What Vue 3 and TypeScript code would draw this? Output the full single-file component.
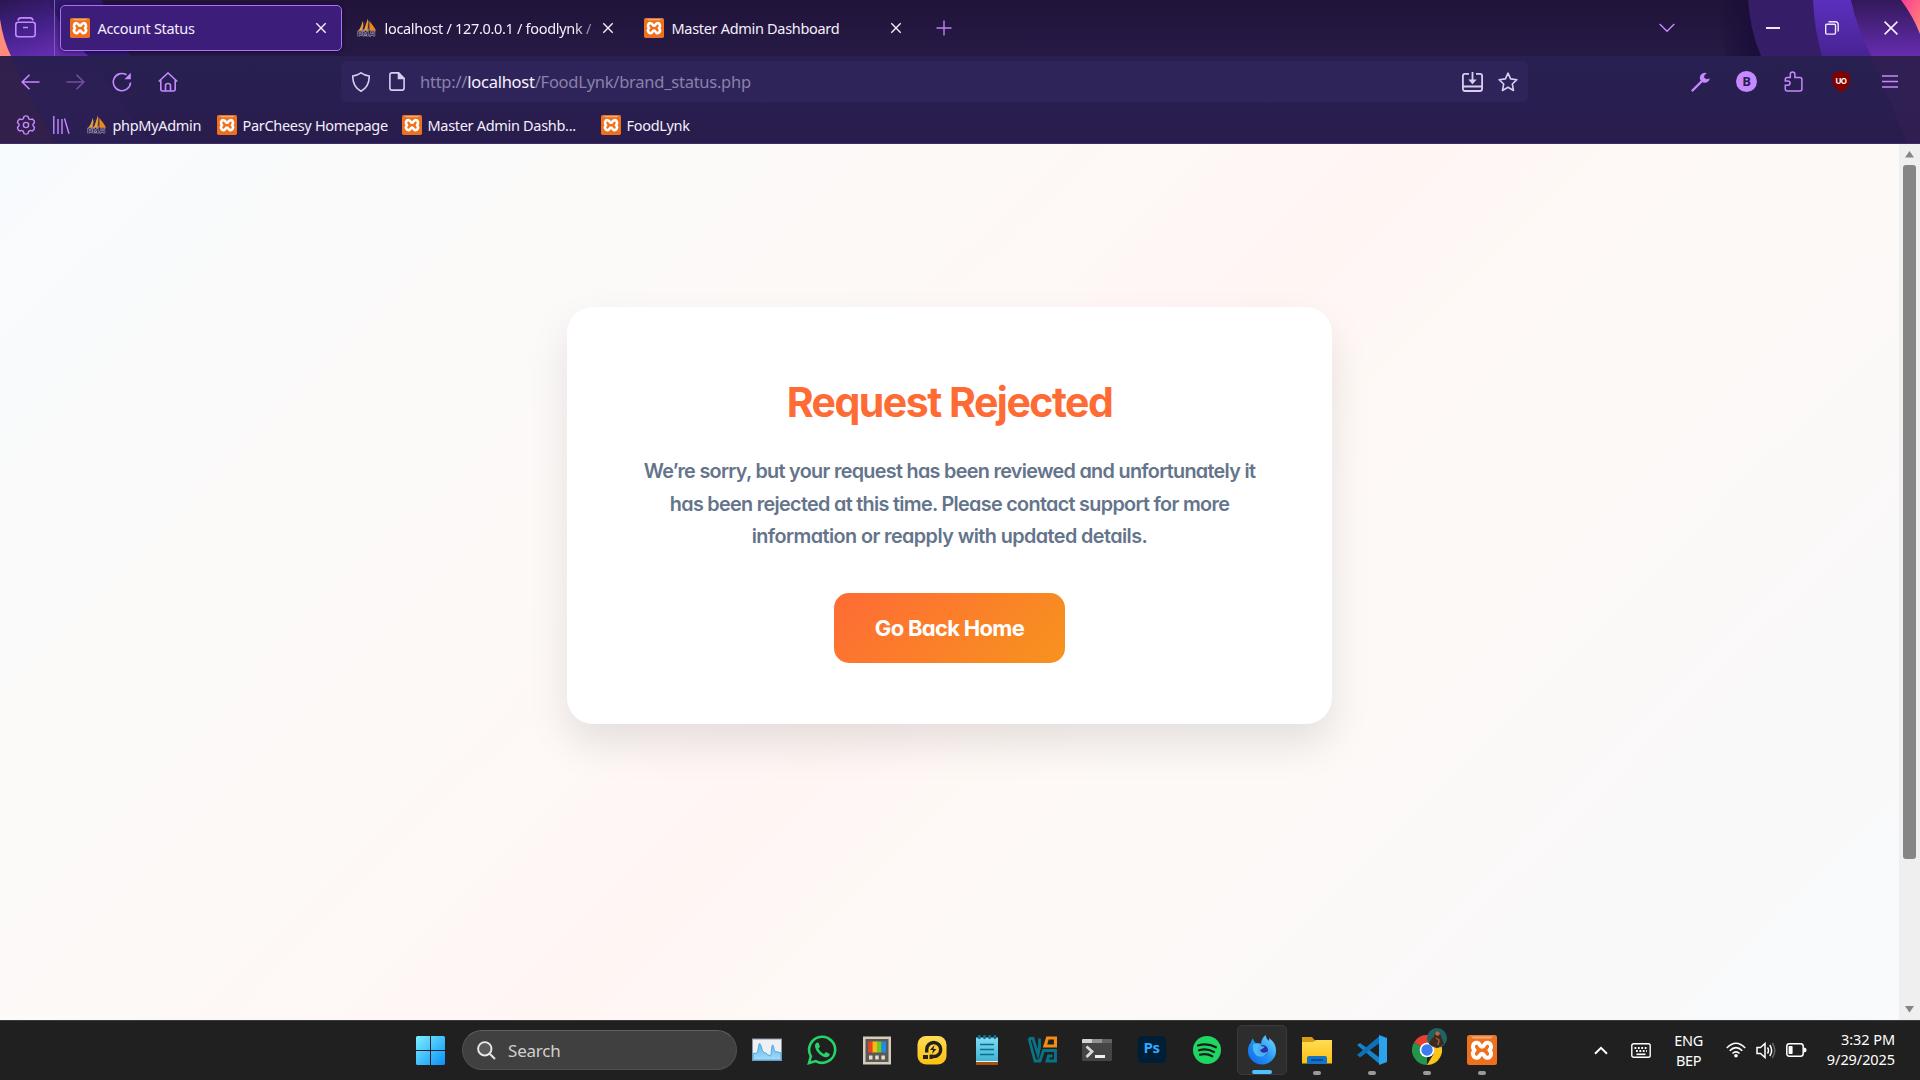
<script setup lang="ts">
interface Bookmark { label: string; icon: string; width: number }
interface TaskApp { id: string; state?: 'active' | 'running' }

const bookmarks: Bookmark[] = [
  { label: 'phpMyAdmin', icon: 'pma', width: 130 },
  { label: 'ParCheesy Homepage', icon: 'xampp', width: 185 },
  { label: 'Master Admin Dashb...', icon: 'xampp', width: 199 },
  { label: 'FoodLynk', icon: 'xampp', width: 100 },
]

const apps: TaskApp[] = [
  { id: 'monitor' }, { id: 'whatsapp' }, { id: 'powertoys' }, { id: 'player' },
  { id: 'notepad' }, { id: 'vm' }, { id: 'terminal' }, { id: 'photoshop' }, { id: 'spotify' },
  { id: 'firefox', state: 'active' }, { id: 'explorer', state: 'running' },
  { id: 'vscode', state: 'running' }, { id: 'chrome', state: 'running' }, { id: 'xampp', state: 'running' },
]
</script>

<template>
  <div class="screen">
    <svg class="defs" width="0" height="0" aria-hidden="true">
      <defs>
        <linearGradient id="gx" x1="0" y1="0" x2="0" y2="1"><stop offset="0" stop-color="#e07a35" /><stop offset=".2" stop-color="#f0701a" /><stop offset="1" stop-color="#ee6f1e" /></linearGradient>
        <linearGradient id="gyellow" x1="0" y1="0" x2="0" y2="1"><stop offset="0" stop-color="#ffdc55" /><stop offset="1" stop-color="#fcc010" /></linearGradient>
        <linearGradient id="gfox" x1="0" y1="1" x2="1" y2="0"><stop offset="0" stop-color="#0a62e8" /><stop offset=".5" stop-color="#2596f5" /><stop offset="1" stop-color="#7ce4ff" /></linearGradient>
        <linearGradient id="gmon" x1="0" y1="0" x2="0" y2="1"><stop offset="0" stop-color="#5fb4ec" /><stop offset="1" stop-color="#a5dcfa" /></linearGradient>
        <linearGradient id="gnote" x1="0" y1="0" x2="0" y2="1"><stop offset="0" stop-color="#7fdcf2" /><stop offset="1" stop-color="#3fb4d4" /></linearGradient>
        <linearGradient id="gwin" x1="0" y1="0" x2="1" y2="1"><stop offset="0" stop-color="#7cf0ff" /><stop offset="1" stop-color="#0a90f8" /></linearGradient>
      </defs>
      <symbol id="xampp" viewBox="0 0 30 30">
        <rect width="30" height="30" rx="2.500" fill="url(#gx)" />
        <path d="M4 1.500h22l-2 2H6z" fill="#f8b98a" opacity=".8" />
        <path d="M10.300 7.800C6.300 7.300 4.300 12 7.600 15.200C4.300 18.500 6.300 23.200 10.300 22.700C13.300 22.300 12.500 18.800 15 18.800C17.500 18.800 16.700 22.300 19.700 22.700C23.700 23.200 25.700 18.500 22.400 15.200C25.700 12 23.700 7.300 19.700 7.800C16.700 8.200 17.500 11.700 15 11.700C12.500 11.700 13.300 8.200 10.300 7.800Z" fill="none" stroke="#fff" stroke-width="3.900" stroke-linejoin="round" />
      </symbol>
      <symbol id="pma" viewBox="0 0 21 21">
        <path d="M1 13.500C4 11 5 7 6 3c1 4 0 8 0 10.500zM7 13.500C9 9 10 4 11.500.500c1 5-.5 9 .5 13z" fill="#f6a02c" />
        <path d="M13 3c2 3 5 6 7 10.500h-7z" fill="#ee8a12" />
        <path d="M7.500 5l-2 8M12 3l-1 10" stroke="#7b6a70" stroke-width=".7" />
        <path d="M1.500 19.500v-5h3v3h-3M7 19.500v-5l2 3 2-3v5M13.500 19.500l1.800-5h2.700v5m-3.500-2h3.500" fill="none" stroke="#9b94ac" stroke-width="2.200" />
        <path d="M1.500 19.500v-5h3v3h-3M7 19.500v-5l2 3 2-3v5M13.500 19.500l1.800-5h2.700v5m-3.500-2h3.500" fill="none" stroke="#30264e" stroke-width=".9" />
      </symbol>
      <symbol id="cross" viewBox="0 0 12 12"><path d="M1.300 1.300l9.400 9.400m0-9.400l-9.400 9.400" stroke="currentColor" stroke-width="1.400" fill="none" /></symbol>
      <symbol id="monitor" viewBox="0 0 30 30">
        <rect x=".5" y="4" width="29" height="21.500" fill="#eef0f3" stroke="#8c98a3" />
        <path d="M1 18.500l4-.5c1-1 1.300-8.500 2.500-9.500 1 0 2 4 3 7 1 2 2 2.500 3.500 2.500l1.500 2h1.500l1.500 1.200c1-2 .8-10.700 2.200-11.200 1 0 1 4.500 2.300 6.500L26 17l3 1v7H1z" fill="url(#gmon)" stroke="#4aa3dc" stroke-width=".9" />
      </symbol>
      <symbol id="whatsapp" viewBox="0 0 30 30">
        <path d="M2 28l1.900-6.700a13 13 0 1 1 4.900 4.800z" fill="none" stroke="#25d366" stroke-width="2.600" />
        <path d="M10.300 7.500c-1.700.5-2.500 2.200-2.300 4 1 5 5.500 9.600 10.500 10.800 2.300.2 4.200-1.200 4.300-3.300l-3.800-2-2 2c-2.500-1-4.500-3-5.600-5.500l1.600-1.800-1.500-4z" fill="#25d366" />
      </symbol>
      <symbol id="powertoys" viewBox="0 0 30 30">
        <rect x="1" y="1.500" width="28" height="28" fill="#d6ccb8" /><rect x="3.500" y="4" width="23" height="23" fill="#5a5957" />
        <rect x="6" y="6.500" width="4.600" height="11" fill="#e8431f" /><rect x="10.500" y="6.500" width="4.600" height="11" fill="#fbb813" /><rect x="15" y="6.500" width="4.600" height="11" fill="#6fc92e" /><rect x="19.500" y="6.500" width="4.600" height="11" fill="#1c8be4" />
        <path d="M7 20.500h3.500v4H7zM13.200 20.500h3.500v4h-3.500zM19.400 20.500h3.500v4h-3.500z" fill="#e7ddc9" />
      </symbol>
      <symbol id="player" viewBox="0 0 30 30">
        <rect x=".5" y="1" width="29" height="28.500" rx="8.500" fill="url(#gyellow)" />
        <path d="M9.700 17.500V14.500a7 7 0 1 1 7 7H13" fill="none" stroke="#24211c" stroke-width="3.400" />
        <path d="M6 20h5v4H6zM12.500 19.800h3v4.200h-3z" fill="#24211c" />
        <path d="M17.500 10l-4.500 5h3l-1 4 4.500-5h-3z" fill="#24211c" />
      </symbol>
      <symbol id="notepad" viewBox="0 0 30 30">
        <path d="M4 27h22v3H4z" fill="#a4500f" /><path d="M4 25h22v2H4z" fill="#f2eee8" /><rect x="4" y="2.500" width="22" height="23.500" fill="url(#gnote)" />
        <path d="M8 9.500h14M8 14.500h14M8 19.500h14" stroke="#0c6d8c" stroke-width="1.700" /><path d="M7.300 1.300v1.500M12.500 1.300v1.500M17.700 1.300v1.500M22.900 1.300v1.500" stroke="#0c7192" stroke-width="2.800" stroke-linecap="round" />
      </symbol>
      <symbol id="vm" viewBox="0 0 30 30">
        <path d="M2 3.500h4l5 16 1.500-7V3.500M2 3.500l6 22.500h5l3.500-10.500h12v10.500h-8.500l1.500-5h4" fill="none" stroke="#087387" stroke-width="2.800" />
        <path d="M18 11l2.500-8h8v8z" fill="none" stroke="#f28c14" stroke-width="3.200" />
      </symbol>
      <symbol id="terminal" viewBox="0 0 30 30">
        <rect y="4" width="30" height="22" rx="1.500" fill="#454545" /><path d="M0 8V5q0-1 1-1h9v4z" fill="#d4d4d4" /><path d="M10 4h10v4H10z" fill="#929292" /><path d="M20 4h9q1 0 1 1v3H20z" fill="#646464" />
        <path d="M4.500 11.500l5.500 5-5.500 5.500" fill="none" stroke="#d9d9d9" stroke-width="2.800" /><path d="M13 20h10v3H13z" fill="#f1f1f1" />
      </symbol>
      <symbol id="spotify" viewBox="0 0 30 30">
        <circle cx="15" cy="15" r="14" fill="#1ed760" />
        <path d="M6 10.500c6-1.800 12.500-1.200 18 1.800M7 15.300c5-1.500 10.500-.9 15 1.700M8 19.800c4-1.200 8.500-.7 12.300 1.500" fill="none" stroke="#1c1c1c" stroke-width="2.200" stroke-linecap="round" />
      </symbol>
      <symbol id="firefox" viewBox="0 0 30 30">
        <path d="M6 3.500c.5 2 1.500 3.500 3 4.500 2-.3 4 0 5 1 .2-4 2-7 4.700-9 .2 3 1.500 4.500 3.300 6 .3-1 .3-2 0-3 5 3.500 7.300 8 7 13A14 13.500 0 0 1 1 16C.8 11.500 2.800 8.500 4 7.500c.3-1.800 1-3 2-4z" fill="url(#gfox)" />
        <circle cx="15.500" cy="15.500" r="5.500" fill="#2b2fa8" /><path d="M6 9.500c3-1 6-.5 8.500 1.500 1.500.3 2.500.5 3 1.300-1.500 1.700-3.500 1.500-4.300 3 .5 2.700 4.800 3.500 7.800.7-2 6-8.500 7-12.500 3.500C6 16.500 5.500 13 6 9.500z" fill="#53c4fb" opacity=".85" />
      </symbol>
      <symbol id="explorer" viewBox="0 0 30 30">
        <path d="M0 2h10l3 3.500H30V12H0z" fill="#d99a14" /><path d="M0 7h11l3-2h16v23.500H0z" fill="url(#gyellow)" />
        <path d="M5 29v-6q0-2 2-2h16q2 0 2 2v6z" fill="#1273c8" /><path d="M9 25h12" stroke="#0a467f" stroke-width="1.600" />
      </symbol>
      <symbol id="vscode" viewBox="0 0 30 30">
        <path d="M0 10l3-2 19.500 14.500V29z" fill="#1683cd" /><path d="M0 20l3 2.500L22.500 8V1z" fill="#0d71b8" />
        <path d="M22 0l8 3v24l-8 3z" fill="#2da2ec" />
      </symbol>
      <symbol id="chrome" viewBox="0 0 30 30">
        <path d="M15 15L2 7.500A15 15 0 0 1 28 7.500z" fill="#e93f32" /><path d="M15 15V30A15 15 0 0 1 2 7.500z" fill="#23964b" /><path d="M15 7.500h13A15 15 0 0 1 15 30l6.500-11z" fill="#fcc419" />
        <circle cx="15" cy="15" r="7.300" fill="#fff" /><circle cx="15" cy="15" r="5.700" fill="#3b7cf0" />
      </symbol>
      <symbol id="photoshop" viewBox="0 0 30 30"><rect x=".5" y="1" width="29" height="27" rx="5" fill="#001e36" /></symbol>
    </svg>

    <header class="tabs">
      <svg class="art" width="1920" height="56" viewBox="0 0 1920 56">
        <defs>
          <linearGradient id="la" x1="0" y1="0" x2=".4" y2="1"><stop offset="0" stop-color="#2b1752" /><stop offset=".55" stop-color="#43218a" /><stop offset="1" stop-color="#622cac" /></linearGradient>
          <linearGradient id="lb" x1="0" y1="0" x2="0" y2="1"><stop offset="0" stop-color="#5b2fbe" /><stop offset="1" stop-color="#482392" /></linearGradient>
          <linearGradient id="lc" x1="0" y1="0" x2="0" y2="1"><stop offset="0" stop-color="#33195a" /><stop offset="1" stop-color="#662cb0" /></linearGradient>
          <linearGradient id="ld" x1="0" y1="0" x2="1" y2="1"><stop offset="0" stop-color="#ff3b95" /><stop offset="1" stop-color="#ff8a78" /></linearGradient>
          <linearGradient id="le"><stop offset="0" stop-color="#160a30" stop-opacity="0" /><stop offset="1" stop-color="#160a38" stop-opacity=".8" /></linearGradient>
        </defs>
        <path d="M0 0H102Q108 30 131 56H0z" fill="#35197a" opacity=".75" />
        <path d="M0 0H48Q60 28 88 56H0z" fill="url(#la)" />
        <path d="M0 19Q3 40 11 56H0z" fill="#ff8b7b" />
        <path d="M1715 0h33q3 32 13 56h-35z" fill="url(#le)" />
        <path d="M1748 0h172v56h-159q-11-26-13-56z" fill="#351d67" />
        <path d="M1813 0h38q8 30 20 56h-49q-8-28-9-56z" fill="url(#lb)" />
        <path d="M1851 0h69v56h-49q-14-28-20-56z" fill="url(#lc)" />
        <path d="M1901 0h19v34q-7-18-19-34z" fill="url(#ld)" />
      </svg>
      <div class="recent">
        <svg width="21" height="21" viewBox="0 0 21 21" fill="none" stroke="#c689ff" stroke-width="1.600"><rect x=".8" y="5.300" width="19.400" height="14.400" rx="2.500" /><path d="M3 3.500Q3.500.9 6 .9h9q2.500 0 3 2.600M8 10.500h5" /></svg>
      </div>
      <div class="tab active"><svg class="fav"><use href="#xampp" /></svg><span class="name">Account Status</span><svg class="x"><use href="#cross" /></svg></div>
      <div class="tab second"><svg class="fav"><use href="#pma" /></svg><span class="name fade">localhost / 127.0.0.1 / foodlynk /</span><svg class="x"><use href="#cross" /></svg></div>
      <div class="tab third"><svg class="fav"><use href="#xampp" /></svg><span class="name">Master Admin Dashboard</span><svg class="x"><use href="#cross" /></svg></div>
      <svg class="plus" width="16" height="16" viewBox="0 0 16 16"><path d="M8 .5v15M.5 8h15" stroke="#c080fb" stroke-width="1.400" /></svg>
      <div class="winctl">
        <svg width="16" height="10" viewBox="0 0 16 10"><path d="M.7 1l7.300 7.300L15.300 1" fill="none" stroke="#c689ff" stroke-width="1.400" /></svg>
        <svg class="min" width="14" height="14" viewBox="0 0 14 14"><path d="M0 7h14" stroke="#f0e8fa" stroke-width="2" /></svg>
        <svg class="max" width="14" height="14" viewBox="0 0 14 14" fill="none" stroke="#f0e8fa" stroke-width="1.400"><rect x=".7" y="3.300" width="9.800" height="9.800" rx="1" /><path d="M3.500.8h6.800q2.900 0 2.900 2.900v6.800" /></svg>
        <svg width="14" height="14" viewBox="0 0 14 14"><path d="M.6.6l12.800 12.800m0-12.800L.6 13.400" stroke="#fbf5ff" stroke-width="1.500" /></svg>
      </div>
    </header>

    <section class="toolbar">
      <svg class="art" width="1920" height="87" viewBox="0 0 1920 87">
        <path d="M0 0h11q18 44 46 87H0z" fill="#36214b" opacity=".7" /><path d="M11 0h80q30 50 60 87H57Q29 43 11 0z" fill="#2c1f56" opacity=".7" />
        <path d="M1870 0h50v87h-14q-18-50-36-87z" fill="#321f52" opacity=".8" />
      </svg>
      <div class="nav">
        <div class="navbtns">
          <svg width="19" height="16" viewBox="0 0 19 16"><path d="M18.500 8H1.500M8.500.7L1.200 8l7.300 7.300" /></svg>
          <svg class="dim" width="19" height="16" viewBox="0 0 19 16"><path d="M.5 8h17M10.500.7L17.800 8l-7.300 7.300" /></svg>
          <svg width="20" height="20" viewBox="0 0 20 20"><path d="M18.500 10.500A8.600 8.600 0 1 1 14.500 2.800" /><path d="M18.800.8v6.400h-6.400z" fill="#c689ff" stroke="none" /></svg>
          <svg width="20" height="20" viewBox="0 0 20 20"><path d="M.7 9.500L10 1l9.300 8.500M2.800 8v9q0 2 2 2h10.400q2 0 2-2V8M7.500 19v-5.500q0-2 2.500-2t2.500 2V19" /></svg>
        </div>
        <div class="url">
          <svg width="18" height="20" viewBox="0 0 18 20"><path d="M9 .8q4 2.700 8.200 3.200Q17.500 14.500 9 19.200.5 14.500.8 4 5 3.500 9 .8z" /></svg>
          <svg class="page" width="16" height="19" viewBox="0 0 16 19"><path d="M9.500.9H3Q.9.900.9 3v13q0 2.100 2.100 2.100h10q2.100 0 2.100-2.100V6.500z" /><path d="M9.500.9v5.600h5.600z" fill="#dacdf0" /></svg>
          <span class="addr">http://<b>localhost</b>/FoodLynk/brand_status.php</span>
          <svg class="save" width="21" height="20" viewBox="0 0 21 20"><path d="M7 1.800H3Q.9 1.800.9 4v12.500q0 2.500 2.100 2.500h15q2.100 0 2.100-2.500V4q0-2.200-2.100-2.200h-4M1 14.500h19" stroke-width="1.800" /><path d="M10.500 0v10" stroke-width="1.800" /><path d="M6.300 7.500h8.400l-4.200 4.700z" fill="#dacdf0" stroke="none" /></svg>
          <svg width="20" height="20" viewBox="0 0 20 20"><path d="M10 1.200l2.600 5.700 6.300.8-4.600 4.300 1.200 6.500L10 15.300l-5.500 3.200L5.700 12 1.100 7.700l6.300-.8z" stroke-linejoin="round" /></svg>
        </div>
        <div class="ext">
          <svg width="20" height="20" viewBox="0 0 20 20"><path d="M1.500 18.500L12 8" fill="none" stroke="#c689ff" stroke-width="2.400" stroke-linecap="round" /><path d="M15.800 1.200a5 5 0 1 0 3 5.200l-3.300.8-2.500-1.700.5-2.500z" fill="#c689ff" /></svg>
          <span class="badge">B</span>
          <svg width="19" height="21" viewBox="0 0 19 21"><path d="M3.300 6.500h3V3.300q0-2.400 2.300-2.400t2.300 2.400v3.200h5q2 0 2 2v9.500q0 2-2 2H3.300q-2 0-2-2v-3.700h2.500q2.300 0 2.300-2.200t-2.300-2.200H1.300V8.500q0-2 2-2" fill="none" stroke="#c689ff" stroke-width="1.500" /></svg>
          <span class="ub">uo</span>
          <svg width="16" height="13" viewBox="0 0 16 13"><path d="M0 1h16M0 6.500h16M0 12h16" stroke="#c689ff" stroke-width="1.400" /></svg>
        </div>
      </div>
      <div class="bookmarks">
        <svg width="20" height="20" viewBox="0 0 20 20" fill="none" stroke="#c689ff" stroke-width="1.400"><circle cx="10" cy="10" r="2.600" /><path d="M8 1.500q2-1.300 4 0l.7 2.200 1.500.9 2.300-.5q2 1.200 2 3.400L17 9.200v1.600l1.500 1.700q0 2.200-2 3.400l-2.300-.5-1.500.9-.7 2.200q-2 1.300-4 0l-.7-2.200-1.500-.9-2.300.5q-2-1.200-2-3.400L3 10.800V9.200L1.500 7.500q0-2.200 2-3.400l2.300.5 1.500-.9z" /></svg>
        <svg class="lib" width="17" height="18" viewBox="0 0 17 18"><path d="M.8 0v18M5 3v15M9 3v15M11.500 2.500L16 17.700" fill="none" stroke="#c689ff" stroke-width="1.400" /></svg>
        <div v-for="b in bookmarks" :key="b.label" class="bm" :style="{ width: b.width + 'px' }">
          <svg class="fav"><use :href="'#' + b.icon" /></svg><span>{{ b.label }}</span>
        </div>
      </div>
    </section>

    <main class="view">
      <div class="page-bg">
        <article class="card">
          <h1>Request Rejected</h1>
          <p><span class="l1">We’re sorry, but your request has been reviewed and unfortunately it</span><br><span class="l2">has been rejected at this time. Please contact support for more</span><br><span class="l3">information or reapply with updated details.</span></p>
          <a class="btn">Go Back Home</a>
        </article>
      </div>
      <div class="scroll">
        <svg width="9" height="7" viewBox="0 0 9 7"><path d="M4.500 0L9 6.500H0z" fill="#858585" /></svg>
        <i></i>
        <svg class="down" width="9" height="7" viewBox="0 0 9 7"><path d="M4.500 6.500L9 0H0z" fill="#858585" /></svg>
      </div>
    </main>

    <footer class="taskbar">
      <svg class="start" width="29" height="29" viewBox="0 0 29 29"><path d="M0 1.500Q0 0 1.500 0H14v14H0zM15 0h12.500Q29 0 29 1.500V14H15zM0 15h14v14H1.500Q0 29 0 27.500zM15 15h14v12.500q0 1.500-1.500 1.500H15z" fill="url(#gwin)" /></svg>
      <div class="search">
        <svg width="19" height="19" viewBox="0 0 19 19"><circle cx="7.800" cy="7.800" r="6.700" fill="#5a5a5a" stroke="#e8e8e8" stroke-width="1.900" /><path d="M12.700 12.700l5.300 5.300" stroke="#e0e0e0" stroke-width="2.200" /></svg>
        <span>Search</span>
      </div>
      <div class="apps">
        <div v-for="a in apps" :key="a.id" class="app" :class="a.state">
          <svg width="30" height="30"><use :href="'#' + a.id" /></svg>
          <span v-if="a.id === 'photoshop'" class="ps">Ps</span>
          <svg v-if="a.id === 'chrome'" class="avatar" width="20" height="20" viewBox="0 0 20 20"><circle cx="10" cy="10" r="10" fill="#1e6464" /><path d="M2 16q2-6 5-7l1-5 4-1 2 5 3 8-7 4z" fill="#42271d" /><circle cx="10.500" cy="5.500" r="2.300" fill="#b06a45" /><path d="M9 10l3 2-1 5" stroke="#9a6040" stroke-width="1.500" fill="none" /></svg>
          <i v-if="a.state" class="dot"></i>
        </div>
      </div>
      <div class="tray">
        <svg width="14" height="9" viewBox="0 0 14 9"><path d="M1 7.800l6-6 6 6" fill="none" stroke="#fff" stroke-width="2" /></svg>
        <svg class="kb" width="20" height="15" viewBox="0 0 20 15"><rect x=".8" y=".8" width="18.400" height="13.400" rx="1.800" fill="none" stroke="#fff" stroke-width="1.400" /><path d="M3.500 5h13M5 8h11" stroke="#fff" stroke-width="1.800" stroke-dasharray="1.800 1.600" /><path d="M5.500 11.300h9" stroke="#fff" stroke-width="1.600" /></svg>
        <div class="lang"><span>ENG</span><span>BEP</span></div>
        <svg class="wifi" width="20" height="16" viewBox="0 0 20 16" fill="none" stroke="#fff" stroke-width="1.600"><path d="M.8 6q9.200-9.500 18.400 0M3.700 8.800q6.300-6.300 12.600 0M6.500 11.500q3.500-3.200 7 0" /><circle cx="10" cy="13.700" r="1.800" fill="#fff" stroke="none" /></svg>
        <svg class="vol" width="20" height="17" viewBox="0 0 20 17" fill="none" stroke="#fff" stroke-width="1.500"><path d="M1 5.500h3.500L9 1.500v14l-4.500-4H1zM11.500 5.500q2 3 0 6M13.800 3q3.700 5.500 0 11" /><path d="M16.300 1q5 7.500 0 15" stroke="#666" /></svg>
        <svg class="bat" width="21" height="14" viewBox="0 0 21 14"><rect x=".8" y=".8" width="16.400" height="12.400" rx="2.600" fill="none" stroke="#fff" stroke-width="1.500" /><rect x="2.600" y="3" width="4" height="8" rx=".8" fill="#fff" /><path d="M18 4.500q2.600.3 2.600 2.500T18 9.500z" fill="#fff" /></svg>
        <div class="clock"><span>3:32 PM</span><span>9/29/2025</span></div>
      </div>
    </footer>
  </div>
</template>

<style>
html, body { overflow: hidden; }
</style>

<style scoped>
.screen { width: 1920px; height: 1080px; display: flex; flex-direction: column; overflow: hidden; font-family: "Noto Sans", sans-serif; color: #f4effc; }
.screen * { box-sizing: border-box; }
svg { display: block; flex: none; }
.defs { position: absolute; }
.art { position: absolute; left: 0; top: 0; }

.tabs { position: relative; height: 56px; flex: none; display: flex; align-items: center; background: linear-gradient(#211339, #261a45); }
.tabs > :not(.art) { position: relative; }
.recent { width: 55px; height: 56px; padding: 17px 0 0 15px; border-right: 1px solid #7a5fa8; }
.tab { height: 46px; display: flex; align-items: center; font-size: 14.5px; letter-spacing: -0.31px; white-space: nowrap; }
.tab.active { width: 282px; margin-left: 5px; padding: 0 14px 0 9px; border: 1px solid #ad70f6; border-radius: 5px; background: #3c1e7a; box-shadow: 0 1px 4px rgba(10, 3, 30, .6); }
.fav { width: 20px; height: 20px; margin-right: 7.500px; }
.x { width: 12px; height: 12px; margin-left: auto; color: #f4effc; }
.second { width: 257px; margin-left: 15px; }
.fade { width: 214px; overflow: hidden; -webkit-mask: linear-gradient(90deg, #000 88%, transparent 104%); mask: linear-gradient(90deg, #000 88%, transparent 104%); }
.third { width: 258px; margin-left: 30px; }
.plus { margin-left: 34px; }
.winctl { margin-left: auto; margin-right: 22px; display: flex; align-items: center; }
.min { margin-left: 91px; }
.max { margin: 0 45px; }

.toolbar { position: relative; height: 88px; flex: none; background: linear-gradient(#272050, #291e4f 60%, #281c4c); border-bottom: 1px solid #3b2d6b; }
.nav { position: relative; height: 51px; display: flex; align-items: center; }
.navbtns { display: flex; align-items: center; width: 341px; padding-left: 21px; gap: 26px; }
.navbtns .dim { opacity: .45; margin-right: 1px; }
.navbtns svg, .url svg { fill: none; stroke: #c689ff; stroke-width: 1.600; }
.url { width: 1187px; height: 41px; border-radius: 5px; background: #2e245a; display: flex; align-items: center; padding: 0 10px 0 11px; }
.url svg { stroke: #dacdf0; }
.page { margin: 0 15px 0 19px; }
.addr { font-size: 16.5px; letter-spacing: -0.25px; color: #8c80ab; }
.addr b { font-weight: 400; color: #f7f2ff; }
.save { margin-left: auto; margin-right: 15px; }
.ext { display: flex; align-items: center; margin-left: auto; padding-right: 22px; }
.badge { width: 21px; height: 21px; border-radius: 50%; margin: 0 27px 0 25px; background: #c689ff; color: #2a1d50; font: 700 13px/21px "Open Sans", sans-serif; text-align: center; }
.ub { width: 18px; height: 21px; margin: 0 32px 0 29px; background: #800000; clip-path: polygon(50% 0, 100% 14%, 97% 60%, 80% 83%, 50% 100%, 20% 83%, 3% 60%, 0 14%); font: 700 8px/20px "Inter", sans-serif; letter-spacing: -.6px; text-align: center; color: #fff; text-transform: uppercase; }
.bookmarks { position: relative; height: 36px; display: flex; align-items: center; padding-left: 16px; }
.lib { margin: 0 17px; }
.bm { display: flex; align-items: center; font-size: 14.5px; letter-spacing: -0.31px; white-space: nowrap; }
.bm .fav { margin-right: 5.500px; }

.view { height: 876px; flex: none; display: flex; }
.page-bg { width: 1899px; display: flex; justify-content: center; align-items: flex-start; padding-top: 163px; background: linear-gradient(135deg, #f8fbfe 0%, #fafafa 14%, #fdf9f7 36%, #fff6f4 51.5%, #fef9f6 60%, #faf9f9 84%, #f8fafc 100%); }
.card { width: 765px; height: 417px; border-radius: 26px; background: #fff; box-shadow: 0 20px 40px rgba(0, 0, 0, .1); display: flex; flex-direction: column; align-items: center; font-family: "Inter", sans-serif; font-feature-settings: "cv11"; }
h1 { margin: 65px 0 0; font-size: 41px; line-height: 60px; font-weight: 700; letter-spacing: -1.5px; color: #ff6b35; white-space: nowrap; }
p { margin: 23px 0 0; font-size: 19.8px; line-height: 32.600px; font-weight: 600; color: #64748b; text-align: center; white-space: nowrap; }
.l1 { letter-spacing: -0.69px; }
.l2 { letter-spacing: -0.68px; }
.l3 { letter-spacing: -0.57px; }
.btn { margin-top: 40px; width: 231px; height: 70px; border-radius: 15px; background: linear-gradient(135deg, #ff6b35, #f7931e); color: #fff; font-size: 22px; line-height: 71px; font-weight: 700; letter-spacing: -0.7px; text-align: center; }
.scroll { width: 21px; background: #efefef; display: flex; flex-direction: column; align-items: center; padding: 7px 0; }
.scroll i { width: 13px; height: 694px; margin-top: 7px; border-radius: 3px; background: #858585; }
.down { margin-top: auto; }

.taskbar { height: 60px; flex: none; background: #202020; border-top: 1px solid #3c3c3c; display: flex; align-items: center; padding: 0 0 1px 416px; }
.search { width: 275px; height: 40px; margin-left: 17px; border-radius: 20px; background: #404040; border: 1px solid #505050; border-top-color: #606060; display: flex; align-items: center; padding-left: 14px; gap: 12px; font-size: 17px; letter-spacing: -0.2px; color: #d0d0d0; }
.apps { display: flex; margin-left: 2px; }
.app { position: relative; width: 55px; height: 58px; display: flex; align-items: center; justify-content: center; }
.app.active { width: 50px; height: 50px; margin: 4px 2.500px 0; border: 1px solid #3a3a3a; border-radius: 5px; background: #2d2d2d; }
.dot { position: absolute; bottom: 4px; width: 8px; height: 4px; border-radius: 2px; background: #9a9a9a; }
.active .dot { bottom: 0; width: 20px; background: #4cc2ff; }
.ps { position: absolute; top: 16px; font: 700 15px/20px "Open Sans", sans-serif; color: #31a8ff; letter-spacing: -.5px; }
.avatar { position: absolute; left: 28px; top: 7px; }
.tray { margin-left: auto; margin-right: 25px; display: flex; align-items: center; font-size: 14.5px; line-height: 20px; letter-spacing: -0.3px; color: #fff; }
.kb { margin-left: 23px; }
.lang { margin-left: 23px; display: flex; flex-direction: column; align-items: center; padding-bottom: 1px; }
.wifi { margin-left: 23px; }
.vol { margin-left: 10px; }
.bat { margin-left: 10px; }
.clock { width: 88px; display: flex; flex-direction: column; align-items: flex-end; letter-spacing: -0.08px; padding-bottom: 2px; }
</style>
